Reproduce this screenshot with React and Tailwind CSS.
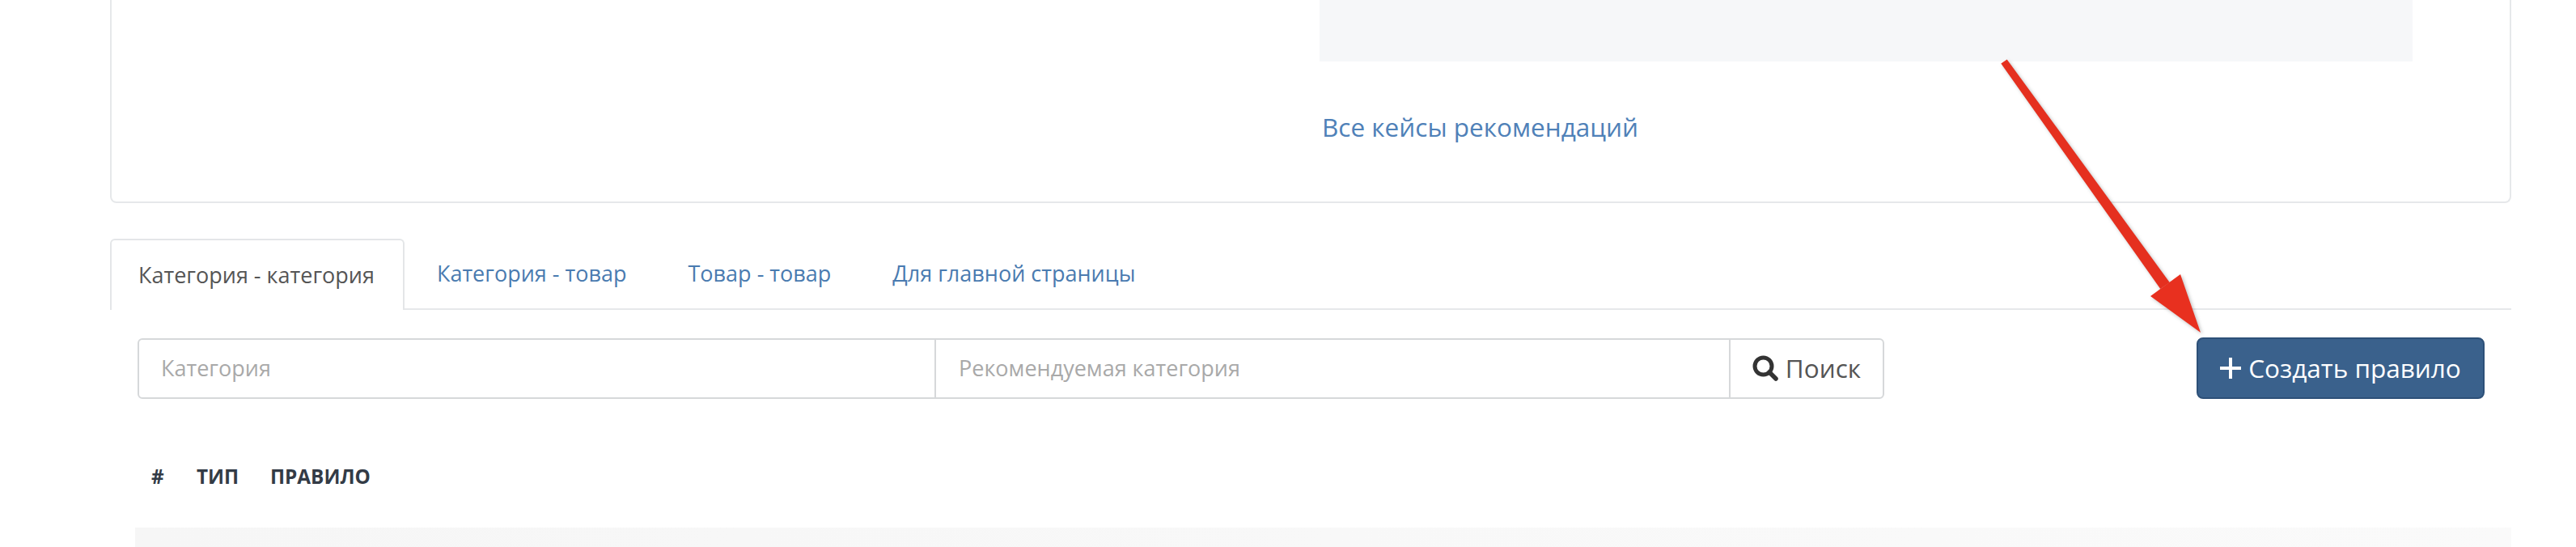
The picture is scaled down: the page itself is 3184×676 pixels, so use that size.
const font = "font-['Open_Sans',sans-serif]";

function Arrow() {
  return (
    <svg className="absolute left-0 top-0 pointer-events-none drop-shadow-[2px_2px_2px_rgba(0,0,0,0.25)]" width="3184" height="676">
      <polygon points="2480.7,73.4 2473.3,78.6 2670.3,357.1 2681.7,348.9" fill="#e5301f" />
      <polygon points="2720,411 2658,366 2695,339" fill="#e8301f" />
    </svg>
  );
}

function SearchIcon() {
  return (
    <svg width="32" height="32" viewBox="0 0 32 32" fill="none" stroke="#333" strokeLinecap="round">
      <circle cx="13.5" cy="13.5" r="10.5" strokeWidth="5" />
      <line x1="21" y1="21" x2="29" y2="29" strokeWidth="5.5" />
    </svg>
  );
}

function PlusIcon() {
  return (
    <svg width="26" height="26" viewBox="0 0 26 26" stroke="#fff" strokeWidth="4">
      <line x1="13" y1="0" x2="13" y2="26" />
      <line x1="0" y1="13" x2="26" y2="13" />
    </svg>
  );
}

function Tab({ children, active }) {
  if (active) {
    return (
      <div className="h-[88px] -mb-px pl-[33px] pr-[35px] flex items-center bg-white border-2 border-b-0 border-[#e4e6e8] rounded-t-[6px] text-[#555]">
        {children}
      </div>
    );
  }
  return <div className="h-[86px] ml-[4px] px-[36px] flex items-center text-[#4a7bb0]">{children}</div>;
}

export default function App() {
  return (
    <div className={`relative h-[676px] w-[3184px] overflow-hidden bg-white text-[27px] ${font}`}>
      <div className="pl-[136px] pr-[80px]">
        <div className="h-[251px] border-2 border-t-0 border-[#e6e8ea] rounded-b-[8px] flex pl-[1493px]">
          <div className="w-[1351px]">
            <div className="h-[76px] bg-[#f6f7f9]" />
            <a className="block mt-[59px] text-[31.5px] leading-[44px] pl-[3px] text-[#4f81b8]">Все кейсы рекомендаций</a>
          </div>
        </div>

        <div className="mt-[44px] flex border-b-2 border-[#e6e8ea] h-[88px]">
          <Tab active>Категория - категория</Tab>
          <Tab>Категория - товар</Tab>
          <Tab>Товар - товар</Tab>
          <Tab>Для главной страницы</Tab>
        </div>

        <div className="pl-[34px] pr-[33px] mt-[34px] flex items-center justify-between">
          <div className="flex h-[75px] w-[2159px] border-2 border-[#d6d8da] rounded-[6px] text-[#a9a9a9]">
            <div className="w-[985px] pl-[27px] flex items-center border-r-2 border-[#d6d8da]">Категория</div>
            <div className="w-[982px] pl-[28px] flex items-center border-r-2 border-[#d6d8da]">Рекомендуемая категория</div>
            <div className="flex-1 flex items-center justify-center gap-[9px] text-[31.5px] text-[#555]">
              <SearchIcon /> Поиск
            </div>
          </div>
          <div className="h-[76px] w-[356px] flex items-center justify-center gap-[9px] bg-[#3a618c] border-2 border-[#2d5078] rounded-[8px] text-white text-[31.5px]">
            <PlusIcon /> Создать правило
          </div>
        </div>

        <div className="mt-[84px] pl-[51px] flex items-center h-[24px] text-[24.3px] font-bold text-[#333b46]">
          <span className="w-[56px]">#</span>
          <span className="w-[91px]">ТИП</span>
          <span>ПРАВИЛО</span>
        </div>

        <div className="mt-[51px] ml-[31px] h-[30px] bg-gradient-to-r from-[#f6f6f6] to-[#fafafa]" />
      </div>
      <Arrow />
    </div>
  );
}
